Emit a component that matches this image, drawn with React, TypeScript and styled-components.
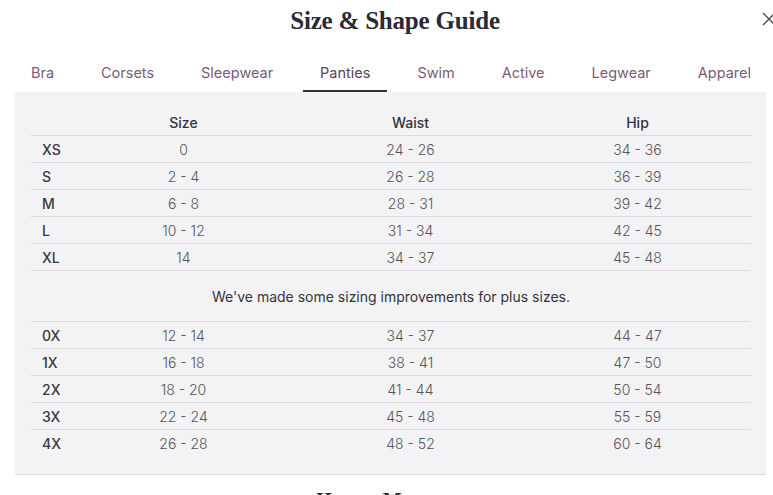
import React from "react";
import styled, { createGlobalStyle } from "styled-components";

const Global = createGlobalStyle`
  html, body { margin: 0; padding: 0; background: #fff; overflow: hidden; }
  body { font-family: Inter, "Open Sans", sans-serif; color: #333; }
`;

const Page = styled.div`
  width: 773px;
  height: 495px;
  overflow: hidden;
`;

const Header = styled.header`
  position: relative;
  height: 40px;
  display: flex;
  align-items: center;
  justify-content: center;
  padding-left: 17px;
`;

const Title = styled.h1`
  margin: 0;
  line-height: 1;
  font-family: "Liberation Serif", "Times New Roman", serif;
  font-weight: 700;
  font-size: 25px;
  letter-spacing: -0.2px;
  color: #2b2a35;
`;

const Close = styled.button`
  position: absolute;
  right: -3px;
  top: 12px;
  width: 14px;
  height: 14px;
  padding: 0;
  border: 0;
  background: none;
  display: flex;
`;

const Tabs = styled.nav`
  display: flex;
  justify-content: space-between;
  margin: 15px 5px 0 14px;
  height: 37px;
`;

const Tab = styled.div<{ $active?: boolean }>`
  padding: 0 17px;
  display: flex;
  align-items: center;
  font-size: 14.5px;
  font-weight: 400;
  color: ${(p) => (p.$active ? "#5e435e" : "#7a5c7a")};
  border-bottom: 2px solid ${(p) => (p.$active ? "#3d2b3d" : "transparent")};
  box-sizing: border-box;
`;

const Panel = styled.section`
  margin: 0 7px 0 15px;
  background: #f3f3f5;
  border-bottom: 1px solid #dcdcdf;
  padding: 17px 15px 18px 16px;
`;

const Table = styled.table`
  width: 720px;
  border-collapse: collapse;
  table-layout: fixed;
  font-size: 14px;
`;

const Th = styled.th<{ $first?: boolean }>`
  height: 26px;
  padding: 0 0 0 ${(p) => (p.$first ? "11px" : "0")};
  text-align: ${(p) => (p.$first ? "left" : "center")};
  font-weight: 500;
  color: #34333a;
  border-bottom: 1px solid #dbdbde;
  vertical-align: middle;
`;

const Row = styled.tr<{ $last?: boolean }>`
  & > td {
    border-bottom: ${(p) => (p.$last ? "none" : "1px solid #dbdbde")};
  }
`;

const Label = styled.td`
  height: 26px;
  padding: 0 0 0 11px;
  text-align: left;
  font-weight: 500;
  color: #3a3940;
  white-space: nowrap;
`;

const Cell = styled.td`
  height: 26px;
  padding: 0;
  text-align: center;
  font-weight: 300;
  color: #55545a;
`;

const Note = styled.td`
  height: 50px;
  padding: 0;
  text-align: center;
  font-weight: 400;
  color: #34333a;
`;

const Below = styled.h2`
  margin: 13px 0 0;
  line-height: 1.2;
  text-align: center;
  font-family: "Liberation Serif", serif;
  font-size: 20px;
  font-weight: 700;
  color: #2b2a35;
`;

const tabs = ["Bra", "Corsets", "Sleepwear", "Panties", "Swim", "Active", "Legwear", "Apparel"];

const top = [
  ["XS", "0", "24 - 26", "34 - 36"],
  ["S", "2 - 4", "26 - 28", "36 - 39"],
  ["M", "6 - 8", "28 - 31", "39 - 42"],
  ["L", "10 - 12", "31 - 34", "42 - 45"],
  ["XL", "14", "34 - 37", "45 - 48"],
];

const plus = [
  ["0X", "12 - 14", "34 - 37", "44 - 47"],
  ["1X", "16 - 18", "38 - 41", "47 - 50"],
  ["2X", "18 - 20", "41 - 44", "50 - 54"],
  ["3X", "22 - 24", "45 - 48", "55 - 59"],
  ["4X", "26 - 28", "48 - 52", "60 - 64"],
];

export default function App() {
  return (
    <Page>
      <Global />
      <Header>
        <Title>Size &amp; Shape Guide</Title>
        <Close aria-label="Close">
          <svg width="14" height="14" viewBox="0 0 14 14">
            <path d="M1 1L13 13M13 1L1 13" stroke="#4a4a52" strokeWidth="1.3" />
          </svg>
        </Close>
      </Header>
      <Tabs>
        {tabs.map((t) => (
          <Tab key={t} $active={t === "Panties"}>
            {t}
          </Tab>
        ))}
      </Tabs>
      <Panel>
        <Table>
          <colgroup>
            <col style={{ width: 39 }} />
            <col style={{ width: 227 }} />
            <col style={{ width: 227 }} />
            <col style={{ width: 227 }} />
          </colgroup>
          <thead>
            <tr>
              <Th $first />
              <Th>Size</Th>
              <Th>Waist</Th>
              <Th>Hip</Th>
            </tr>
          </thead>
          <tbody>
            {top.map((r) => (
              <Row key={r[0]}>
                <Label>{r[0]}</Label>
                <Cell>{r[1]}</Cell>
                <Cell>{r[2]}</Cell>
                <Cell>{r[3]}</Cell>
              </Row>
            ))}
            <Row>
              <Note colSpan={4}>We've made some sizing improvements for plus sizes.</Note>
            </Row>
            {plus.map((r, i) => (
              <Row key={r[0]} $last={i === plus.length - 1}>
                <Label>{r[0]}</Label>
                <Cell>{r[1]}</Cell>
                <Cell>{r[2]}</Cell>
                <Cell>{r[3]}</Cell>
              </Row>
            ))}
          </tbody>
        </Table>
      </Panel>
      <Below>How to Measure</Below>
    </Page>
  );
}
